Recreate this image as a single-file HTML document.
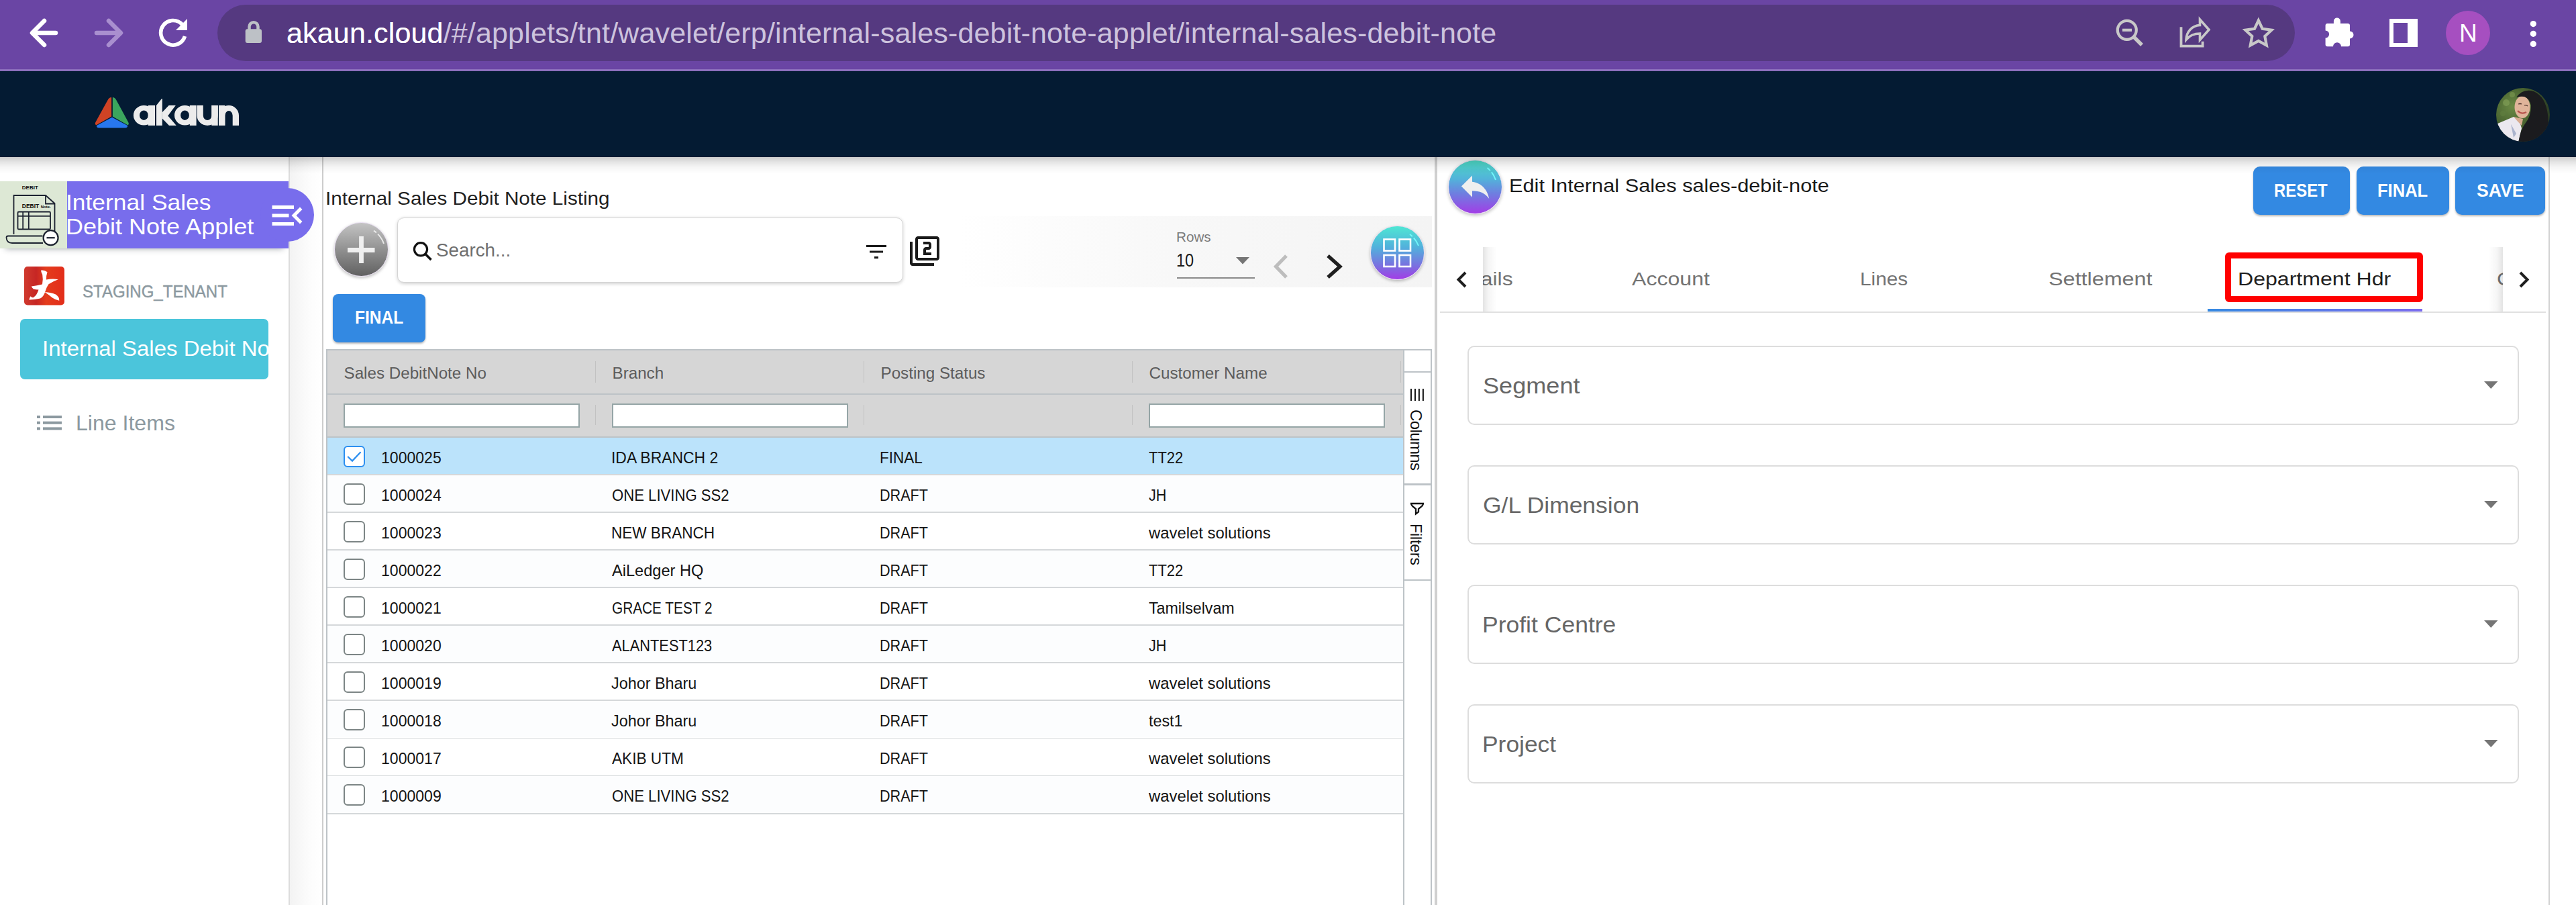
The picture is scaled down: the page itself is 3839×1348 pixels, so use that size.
<!DOCTYPE html>
<html><head><meta charset="utf-8">
<style>
*{box-sizing:border-box;margin:0;padding:0}
html,body{width:3839px;height:1348px;overflow:hidden;background:#fff;font-family:"Liberation Sans",sans-serif}
.a{position:absolute}
.t{position:absolute;white-space:nowrap;line-height:1;transform-origin:0 0}
svg{position:absolute;overflow:visible}
</style></head><body>

<!-- ===== Browser toolbar ===== -->
<div class="a" style="left:0;top:0;width:3839px;height:104px;background:#6a45a4"></div>
<div class="a" style="left:0;top:103px;width:3839px;height:3px;background:#8c6fbc"></div>
<div class="a" style="left:324px;top:7px;width:3096px;height:84px;border-radius:42px;background:#553980"></div>
<!-- back -->
<svg style="left:0;top:0" width="300" height="100"><g fill="none" stroke-linecap="round" stroke-linejoin="round" stroke-width="6.5">
<path d="M49 49H83M66 31L48 49L66 67" stroke="#fff"/>
<path d="M144 49H178M162 31L180 49L162 67" stroke="#a98fcf"/>
<path d="M275.5 54A18.3 18.3 0 1 1 271.5 36.5" stroke="#fff" stroke-width="5.6" stroke-linecap="butt"/>
</g>
<path d="M279 28V45H262Z" fill="#fff"/>
</svg>
<!-- lock -->
<svg style="left:360px;top:25px" width="40" height="45"><path d="M11.5 19V14.75A6.5 6.5 0 0 1 24.5 14.75V19" fill="none" stroke="#bdc1c6" stroke-width="4.5"/><rect x="5.7" y="18.2" width="24.3" height="20.8" rx="3" fill="#bdc1c6"/></svg>
<div class="t" style="left:427px;top:27.5px;font-size:43px;letter-spacing:0.16px;color:#cdc3dd">akaun.cloud<span style="color:#fff;position:absolute;left:0;top:0">akaun.cloud</span>/#/applets/tnt/wavelet/erp/internal-sales-debit-note-applet/internal-sales-debit-note</div>
<!-- right icons -->
<svg style="left:3140px;top:20px" width="270" height="60"><g fill="none" stroke="#c8c8c8" stroke-width="4.2">
<circle cx="29.8" cy="24.8" r="14"/><path d="M23 24.8H37"/><path d="M39.5 34.5L52 47" stroke-width="5.5"/>
<path d="M110.5 20.2V48.7H142.6V41.7" stroke-width="3.8"/>
<path d="M138.5 9L152 24.3L138.5 39.5V30C130 30 123 33 118 39C118.5 27 127 18 138.5 17.5Z" stroke-width="3.6" stroke-linejoin="miter"/>
<path d="M225.80 10.50L231.68 22.91L245.30 24.67L235.31 34.09L237.85 47.58L225.80 41.00L213.75 47.58L216.29 34.09L206.30 24.67L219.92 22.91Z" stroke-linejoin="miter"/>
</g></svg>
<svg style="left:3460px;top:20px" width="330" height="70"><g fill="#fff">
<path d="M17.9 14.9V11.6A5 5 0 0 1 27.9 11.6V14.9H39A3 3 0 0 1 42 17.9V26.4A5.5 5.5 0 0 1 42 37.4V46.2A3 3 0 0 1 39 49.2H29A6 6 0 0 0 17 49.2H8.6A3 3 0 0 1 5.6 46.2V36.5A5.5 5.5 0 0 0 5.6 25.5V17.9A3 3 0 0 1 8.6 14.9Z"/>
<path d="M101 8H143V50H101ZM107 14V44H128V14Z" fill-rule="evenodd"/>
<circle cx="315.3" cy="15.6" r="4.6"/><circle cx="315.3" cy="30.3" r="4.6"/><circle cx="315.3" cy="45.4" r="4.6"/>
</g></svg>
<div class="a" style="left:3645px;top:16px;width:66px;height:66px;border-radius:50%;background:#a64fc0"></div>
<div class="t" style="left:3665px;top:30.5px;font-size:37px;color:#fff">N</div>

<!-- ===== Navy app header ===== -->
<div class="a" style="left:0;top:106px;width:3839px;height:128px;background:#041b33"></div>

<!-- akaun logo -->
<svg style="left:135px;top:140px" width="60" height="56">
<path d="M30.9 5Q27.8 5.2 25.6 9L7.4 42Q5.8 45.6 8.6 46.3L31.1 33.4V5.2Z" fill="#d04325"/>
<path d="M32.9 5Q36.1 5.2 38.3 9L56.2 42Q57.9 45.6 55.2 46.3L32.9 33.4Z" fill="#3ba55d"/>
<path d="M32 34.7L55 46.9Q55.6 50.3 51.5 50.5H12.5Q8.4 50.3 9.1 47Z" fill="#2877ee"/>
</svg>
<svg style="left:195px;top:140px" width="170" height="50"><g fill="#ececec">
<path fill-rule="evenodd" d="M3.9 31.7A15.5 14.8 0 1 0 34.9 31.7A15.5 14.8 0 1 0 3.9 31.7ZM13 31.7A6.4 7.2 0 1 0 25.8 31.7A6.4 7.2 0 1 0 13 31.7Z"/>
<rect x="25.8" y="17" width="10.2" height="30"/>
<path d="M38 17L46 7H46.8V47H38Z"/>
<path d="M46.8 27.3L56.6 17H66.8L55.2 32.4L67.8 47H57L46.8 36.6Z"/>
<path fill-rule="evenodd" d="M65 31.7A15.5 14.8 0 1 0 96 31.7A15.5 14.8 0 1 0 65 31.7ZM74.1 31.7A6.4 7.2 0 1 0 86.9 31.7A6.4 7.2 0 1 0 74.1 31.7Z"/>
<rect x="87.8" y="17" width="9.8" height="30"/>
<path d="M98.5 17V32A15.6 15 0 0 0 129.7 32V17H120.4V32A6.3 6.9 0 0 1 107.8 32V17Z"/>
<rect x="120.4" y="17" width="9.3" height="30"/>
<path d="M131 47V32A15 15 0 0 1 161 32V47H151.7V32A5.7 6.9 0 0 0 140.3 32V47Z"/>
<rect x="131" y="17" width="9.3" height="30"/>
</g></svg>
<!-- avatar -->
<svg style="left:3720px;top:131px" width="80" height="80"><defs><clipPath id="avc"><circle cx="40" cy="40" r="40"/></clipPath>
<radialGradient id="avbg" cx="30%" cy="35%" r="70%"><stop offset="0" stop-color="#6b8a45"/><stop offset=".6" stop-color="#455f2e"/><stop offset="1" stop-color="#2c3d24"/></radialGradient></defs>
<g clip-path="url(#avc)">
<rect width="80" height="80" fill="url(#avbg)"/>
<circle cx="15" cy="22" r="5" fill="#86a35a" opacity=".6"/><circle cx="24" cy="10" r="4" fill="#7d9a52" opacity=".6"/><circle cx="10" cy="38" r="4" fill="#5f7d3f" opacity=".7"/>
<path d="M0 54L26 43L34 47L38 60L33 82H0Z" fill="#ebe8ef"/>
<path d="M26 43Q32 50 38 56L40 46Z" fill="#d7ab90"/>
<path d="M22 54L30 68L26 74Z" fill="#7e8fb5" opacity=".6"/>
<ellipse cx="39" cy="28.5" rx="11.5" ry="16.5" fill="#e0b49a"/>
<path d="M30 14Q40 0 56 5Q74 13 77 40Q80 64 72 82H33Q36 62 44 52Q52 42 52 26Q50 16 42 13Q36 12 30 14Z" fill="#1b1b1e"/>
<path d="M32 34Q38 40 45 36" stroke="#b8554d" stroke-width="2.2" fill="none"/>
<path d="M33 24Q36 23 38 24M42 26Q45 25 47 27" stroke="#4a3028" stroke-width="1.3" fill="none"/>
</g></svg>
<!-- ===== Left sidebar ===== -->
<div class="a" style="left:430px;top:234px;width:2px;height:1114px;background:#dddddd"></div>
<div class="a" style="left:432px;top:234px;width:48px;height:1114px;background:linear-gradient(90deg,#f3f3f3,#fcfcfc 60%,#fff)"></div>

<!-- applet title panel -->
<div class="a" style="left:0;top:270px;width:430px;height:100px;background:#786dec;box-shadow:0 8px 9px -8px rgba(40,50,60,.45)"></div>
<div class="a" style="left:388px;top:280px;width:80px;height:80px;border-radius:50%;background:#786dec"></div>
<div class="a" style="left:0;top:270px;width:100px;height:100px;background:#dde8d5"></div>
<svg style="left:0;top:270px" width="100" height="100">
<g fill="none" stroke="#1c2230" stroke-width="1.8">
<path d="M20.5 79V21H68L81.5 33V81"/><path d="M68 21V33.5H81.5"/>
<rect x="26.5" y="45.5" width="48.5" height="26" rx="1.5"/><path d="M26.5 51.8H75M34.2 45.5V71.5M42.8 45.5V71.5"/>
<path d="M63.5 81.5H12Q9.5 81.5 9.5 84Q10 92 18 92H64"/>
</g>
<circle cx="75.6" cy="84.2" r="11" fill="#fff" stroke="#1c2230" stroke-width="2.2"/><path d="M69.5 84.2H81.7" stroke="#1c2230" stroke-width="2.2"/>
<text x="32.8" y="11.7" font-family="Liberation Sans" font-weight="bold" font-size="8" fill="#111">DEBIT</text>
<text x="32.8" y="40" font-family="Liberation Sans" font-weight="bold" font-size="8.5" fill="#111">DEBIT <tspan font-size="6">Note.</tspan></text>
</svg>
<div class="t" style="left:98.3px;top:285.1px;font-size:33px;transform:scaleX(1.073);color:#fff">Internal Sales</div>
<div class="t" style="left:98.2px;top:320.8px;font-size:33px;transform:scaleX(1.091);color:#fff">Debit Note Applet</div>
<svg style="left:398.3px;top:291px" width="60" height="60" viewBox="0 0 24 24"><path fill="#fff" d="M3 18h13v-2H3v2zm0-5h10v-2H3v2zm0-7v2h13V6H3zm18 9.59L17.42 12 21 8.41 19.59 7l-5 5 5 5L21 15.59z"/></svg>
<!-- tenant -->
<svg style="left:36px;top:397px" width="60" height="58"><defs><linearGradient id="tg" x1="0" x2="1"><stop offset="0" stop-color="#d03a2e"/><stop offset=".3" stop-color="#c62624"/><stop offset=".55" stop-color="#e43c1c"/><stop offset="1" stop-color="#e22d1a"/></linearGradient></defs>
<rect width="60" height="57.5" rx="5" fill="url(#tg)"/>
<path d="M24.9 5.8Q30 4.8 34.5 8.2Q32.8 13 33 19.6Q42 17.5 50.8 19.2Q44 21.5 36.5 26.2Q33 31 31.5 37Q29 45 24 47.5Q15 49.5 7.3 49.4Q8 46 9.6 44.2Q11 46.5 13.5 46.2Q19 43 21.5 34.5Q17 34.5 13.8 33.4Q11.5 31.5 10.8 29.6Q19 28.5 27 26.6Q28.5 19 27.2 12Q25.5 9 24.9 5.8Z" fill="#fff"/><path d="M30.5 38Q41 38.5 47 41.5Q52.5 45 52.3 50.8Q47 50 42 46.5Q36 41.5 30.5 38Z" fill="#fff"/>
</svg>
<div class="t" style="left:123.4px;top:421.8px;font-size:25px;transform:scaleX(0.961);color:#8c99a0;-webkit-text-stroke:0.4px #8c99a0">STAGING_TENANT</div>
<!-- teal item -->
<div class="a" style="left:30px;top:475px;width:370px;height:90px;border-radius:7px;background:#4bc5db;overflow:hidden">
<div class="t" style="left:33.2px;top:28.6px;font-size:31px;transform:scaleX(1.063);color:#fff">Internal Sales Debit Note</div>
</div>
<!-- line items -->
<svg style="left:55px;top:619px" width="38" height="22"><g fill="#8c99a0"><rect x="0" y="0" width="5" height="4"/><rect x="9" y="0" width="28" height="4"/><rect x="0" y="8.7" width="5" height="4"/><rect x="9" y="8.7" width="28" height="4"/><rect x="0" y="17.4" width="5" height="4"/><rect x="9" y="17.4" width="28" height="4"/></g></svg>
<div class="t" style="left:113.4px;top:614.6px;font-size:31.5px;transform:scaleX(1.018);color:#8c99a0">Line Items</div>
<!-- ===== Listing panel ===== -->
<div class="a" style="left:480px;top:234px;width:2px;height:1114px;background:#cdcdcd"></div>

<!-- LISTING START -->
<!-- listing title & toolbar -->
<div class="t" style="left:484.6px;top:281.6px;font-size:27.5px;transform:scaleX(1.078);color:#1f1f1f">Internal Sales Debit Note Listing</div>
<div class="a" style="left:1430px;top:322px;width:704px;height:106px;background:linear-gradient(90deg,rgba(248,248,248,0),#f8f8f8 45%,#f4f4f4)"></div>
<div class="a" style="left:497.5px;top:331px;width:81px;height:81px;border-radius:50%;border:1.5px solid #e6dcef;background:linear-gradient(180deg,#c4c4c4,#8c8c8c 55%,#616161);box-shadow:0 2px 4px rgba(0,0,0,.25)"></div>
<svg style="left:497.5px;top:331px" width="81" height="81"><path d="M20 41.5H60.5M40.5 21V61" stroke="#efefef" stroke-width="6.8"/><path d="M59 12.5A38 38 0 0 1 74 32" fill="none" stroke="rgba(255,255,255,.75)" stroke-width="2" stroke-dasharray="5 3 40"/></svg>
<div class="a" style="left:591.5px;top:323.5px;width:754.5px;height:97px;border-radius:10px;background:#fff;border:1.8px solid #d4d4d4;box-shadow:0 1.5px 5px rgba(0,0,0,.18)"></div>
<svg style="left:612px;top:357px" width="36" height="36"><circle cx="15" cy="14.3" r="9.6" fill="none" stroke="#111" stroke-width="3.2"/><path d="M21.8 21.3L30.5 30" stroke="#111" stroke-width="3.6"/></svg>
<div class="t" style="left:650.3px;top:358.3px;font-size:28.5px;transform:scaleX(0.974);color:#6f6f6f">Search...</div>
<svg style="left:1291px;top:365px" width="31" height="21"><g fill="#1a1a1a"><rect x="0" y="0" width="30" height="3"/><rect x="5" y="8.5" width="20" height="3"/><rect x="12" y="17" width="6" height="3.2"/></g></svg>
<svg style="left:1354px;top:350px" width="48" height="48" viewBox="0 0 24 24"><path fill="#1a1a1a" d="M3 5H1v16c0 1.1.9 2 2 2h16v-2H3V5zm18-4H7c-1.1 0-2 .9-2 2v14c0 1.1.9 2 2 2h14c1.1 0 2-.9 2-2V3c0-1.1-.9-2-2-2zm0 16H7V3h14v14zm-4-4h-4v-2h2c1.1 0 2-.89 2-2V7c0-1.11-.9-2-2-2h-4v2h4v2h-2c-1.1 0-2 .89-2 2v4h6v-2z"/></svg>
<div class="t" style="left:1752.6px;top:341.8px;font-size:21px;transform:scaleX(0.984);color:#7a7a7a">Rows</div>
<div class="t" style="left:1752.8px;top:375.4px;font-size:27px;transform:scaleX(0.87);color:#1a1a1a">10</div>
<svg style="left:1842px;top:383px" width="20" height="11"><path d="M0 0H20L10 10.5Z" fill="#757575"/></svg>
<div class="a" style="left:1754px;top:412.5px;width:116px;height:2px;background:#8a8a8a"></div>
<svg style="left:1895px;top:376px" width="110" height="42"><path d="M22 5L6.5 21L22 37" fill="none" stroke="#bdbdbd" stroke-width="5.2"/><path d="M84 5L102 21L84 37" fill="none" stroke="#1f1f1f" stroke-width="5.2"/></svg>
<div class="a" style="left:2042px;top:336px;width:80.5px;height:80.5px;border-radius:50%;border:1.5px solid #e8dcf0;background:linear-gradient(180deg,#4ee7d3,#52b0dc 40%,#7b6fe0 75%,#a23de6);box-shadow:0 2px 4px rgba(0,0,0,.25)"></div>
<svg style="left:2042px;top:336px" width="81" height="81"><g fill="none" stroke="#fff" stroke-width="2.6"><rect x="20.5" y="20.5" width="16.5" height="17"/><rect x="43.5" y="20.5" width="16.5" height="17"/><rect x="20.5" y="44" width="16.5" height="17"/><rect x="43.5" y="44" width="16.5" height="17"/></g><path d="M59 13A38 38 0 0 1 72 30" fill="none" stroke="rgba(120,255,255,.85)" stroke-width="2" stroke-dasharray="5 3 40"/></svg>
<div class="a" style="left:496px;top:438px;width:138px;height:72px;border-radius:8px;background:#3389e2;box-shadow:0 2px 3px rgba(0,0,0,.28)"></div>
<div class="t" style="left:528.5px;top:459.3px;font-size:28px;font-weight:bold;color:#fff;transform:scaleX(0.875)">FINAL</div>
<!-- table -->
<div class="a" style="left:486px;top:520px;width:1648px;height:830px;border:2px solid #bdc3c7;border-bottom:none;background:#fff"></div>
<div class="a" style="left:488px;top:522px;width:1603px;height:130px;background:#d6d6d6"></div>
<div class="a" style="left:488px;top:586px;width:1603px;height:2px;background:#bdc3c7"></div>
<div class="a" style="left:488px;top:650px;width:1603px;height:2px;background:#bdc3c7"></div>
<div class="t" style="left:512.5px;top:543.9px;font-size:24.2px;color:#5c5c5c">Sales DebitNote No</div>
<div class="a" style="left:512px;top:601px;width:352px;height:36px;border:2px solid #95a5a6;background:#fff"></div>
<div class="t" style="left:912.5px;top:543.9px;font-size:24.2px;color:#5c5c5c">Branch</div>
<div class="a" style="left:887px;top:538px;width:1px;height:32px;background:#c2c2c2"></div>
<div class="a" style="left:887px;top:603px;width:1px;height:30px;background:#c2c2c2"></div>
<div class="a" style="left:912px;top:601px;width:352px;height:36px;border:2px solid #95a5a6;background:#fff"></div>
<div class="t" style="left:1312.5px;top:543.9px;font-size:24.2px;color:#5c5c5c">Posting Status</div>
<div class="a" style="left:1287px;top:538px;width:1px;height:32px;background:#c2c2c2"></div>
<div class="a" style="left:1287px;top:603px;width:1px;height:30px;background:#c2c2c2"></div>
<div class="t" style="left:1712.5px;top:543.9px;font-size:24.2px;color:#5c5c5c">Customer Name</div>
<div class="a" style="left:1687px;top:538px;width:1px;height:32px;background:#c2c2c2"></div>
<div class="a" style="left:1687px;top:603px;width:1px;height:30px;background:#c2c2c2"></div>
<div class="a" style="left:1712px;top:601px;width:352px;height:36px;border:2px solid #95a5a6;background:#fff"></div>
<div class="a" style="left:2087px;top:538px;width:1px;height:32px;background:#c2c2c2"></div>
<div class="a" style="left:2087px;top:603px;width:1px;height:30px;background:#c2c2c2"></div>
<div class="a" style="left:488px;top:652.0px;width:1603px;height:54px;background:#bbe3fb"></div>
<div class="a" style="left:488px;top:706.2px;width:1603px;height:2px;background:#d5d8da"></div>
<div class="a" style="left:512.2px;top:664.0px;width:32px;height:32px;border:2px solid #2c8ff0;border-radius:6px;background:#fff"></div>
<svg style="left:512.2px;top:664.0px" width="32" height="32"><path d="M6.2 16L13 22.5L25.6 9.2" fill="none" stroke="#2c8ff0" stroke-width="2.3"/></svg>
<div class="t" style="left:568.0px;top:669.8px;font-size:24.5px;transform:scaleX(0.941);color:#141414">1000025</div>
<div class="t" style="left:910.5px;top:669.8px;font-size:24.5px;transform:scaleX(0.936);color:#141414">IDA BRANCH 2</div>
<div class="t" style="left:1310.7px;top:669.8px;font-size:24.5px;transform:scaleX(0.919);color:#141414">FINAL</div>
<div class="t" style="left:1712.4px;top:669.8px;font-size:24.5px;transform:scaleX(0.895);color:#141414">TT22</div>
<div class="a" style="left:488px;top:708.0px;width:1603px;height:54px;background:#fcfdfe"></div>
<div class="a" style="left:488px;top:762.2px;width:1603px;height:2px;background:#d5d8da"></div>
<div class="a" style="left:512.2px;top:720.0px;width:32px;height:32px;border:2.2px solid #7c8585;border-radius:6px;background:#fff"></div>
<div class="t" style="left:568.0px;top:725.8px;font-size:24.5px;transform:scaleX(0.941);color:#141414">1000024</div>
<div class="t" style="left:911.5px;top:725.8px;font-size:24.5px;transform:scaleX(0.903);color:#141414">ONE LIVING SS2</div>
<div class="t" style="left:1310.7px;top:725.8px;font-size:24.5px;transform:scaleX(0.881);color:#141414">DRAFT</div>
<div class="t" style="left:1711.5px;top:725.8px;font-size:24.5px;transform:scaleX(0.881);color:#141414">JH</div>
<div class="a" style="left:488px;top:764.1px;width:1603px;height:54px;background:#ffffff"></div>
<div class="a" style="left:488px;top:818.3px;width:1603px;height:2px;background:#d5d8da"></div>
<div class="a" style="left:512.2px;top:776.1px;width:32px;height:32px;border:2.2px solid #7c8585;border-radius:6px;background:#fff"></div>
<div class="t" style="left:568.0px;top:781.9px;font-size:24.5px;transform:scaleX(0.941);color:#141414">1000023</div>
<div class="t" style="left:910.6px;top:781.9px;font-size:24.5px;transform:scaleX(0.92);color:#141414">NEW BRANCH</div>
<div class="t" style="left:1310.7px;top:781.9px;font-size:24.5px;transform:scaleX(0.881);color:#141414">DRAFT</div>
<div class="t" style="left:1712.4px;top:781.9px;font-size:24.5px;transform:scaleX(0.974);color:#141414">wavelet solutions</div>
<div class="a" style="left:488px;top:820.1px;width:1603px;height:54px;background:#fcfdfe"></div>
<div class="a" style="left:488px;top:874.3px;width:1603px;height:2px;background:#d5d8da"></div>
<div class="a" style="left:512.2px;top:832.1px;width:32px;height:32px;border:2.2px solid #7c8585;border-radius:6px;background:#fff"></div>
<div class="t" style="left:568.0px;top:837.9px;font-size:24.5px;transform:scaleX(0.941);color:#141414">1000022</div>
<div class="t" style="left:912.4px;top:837.9px;font-size:24.5px;transform:scaleX(0.962);color:#141414">AiLedger HQ</div>
<div class="t" style="left:1310.7px;top:837.9px;font-size:24.5px;transform:scaleX(0.881);color:#141414">DRAFT</div>
<div class="t" style="left:1712.4px;top:837.9px;font-size:24.5px;transform:scaleX(0.895);color:#141414">TT22</div>
<div class="a" style="left:488px;top:876.2px;width:1603px;height:54px;background:#ffffff"></div>
<div class="a" style="left:488px;top:930.4px;width:1603px;height:2px;background:#d5d8da"></div>
<div class="a" style="left:512.2px;top:888.2px;width:32px;height:32px;border:2.2px solid #7c8585;border-radius:6px;background:#fff"></div>
<div class="t" style="left:568.0px;top:894.0px;font-size:24.5px;transform:scaleX(0.941);color:#141414">1000021</div>
<div class="t" style="left:911.6px;top:894.0px;font-size:24.5px;transform:scaleX(0.849);color:#141414">GRACE TEST 2</div>
<div class="t" style="left:1310.7px;top:894.0px;font-size:24.5px;transform:scaleX(0.881);color:#141414">DRAFT</div>
<div class="t" style="left:1712.4px;top:894.0px;font-size:24.5px;transform:scaleX(0.947);color:#141414">Tamilselvam</div>
<div class="a" style="left:488px;top:932.2px;width:1603px;height:54px;background:#fcfdfe"></div>
<div class="a" style="left:488px;top:986.4px;width:1603px;height:2px;background:#d5d8da"></div>
<div class="a" style="left:512.2px;top:944.2px;width:32px;height:32px;border:2.2px solid #7c8585;border-radius:6px;background:#fff"></div>
<div class="t" style="left:568.0px;top:950.0px;font-size:24.5px;transform:scaleX(0.941);color:#141414">1000020</div>
<div class="t" style="left:912.4px;top:950.0px;font-size:24.5px;transform:scaleX(0.891);color:#141414">ALANTEST123</div>
<div class="t" style="left:1310.7px;top:950.0px;font-size:24.5px;transform:scaleX(0.881);color:#141414">DRAFT</div>
<div class="t" style="left:1711.5px;top:950.0px;font-size:24.5px;transform:scaleX(0.881);color:#141414">JH</div>
<div class="a" style="left:488px;top:988.2px;width:1603px;height:54px;background:#ffffff"></div>
<div class="a" style="left:488px;top:1042.4px;width:1603px;height:2px;background:#d5d8da"></div>
<div class="a" style="left:512.2px;top:1000.2px;width:32px;height:32px;border:2.2px solid #7c8585;border-radius:6px;background:#fff"></div>
<div class="t" style="left:568.0px;top:1006.0px;font-size:24.5px;transform:scaleX(0.941);color:#141414">1000019</div>
<div class="t" style="left:911.4px;top:1006.0px;font-size:24.5px;transform:scaleX(0.953);color:#141414">Johor Bharu</div>
<div class="t" style="left:1310.7px;top:1006.0px;font-size:24.5px;transform:scaleX(0.881);color:#141414">DRAFT</div>
<div class="t" style="left:1712.4px;top:1006.0px;font-size:24.5px;transform:scaleX(0.974);color:#141414">wavelet solutions</div>
<div class="a" style="left:488px;top:1044.3px;width:1603px;height:54px;background:#fcfdfe"></div>
<div class="a" style="left:488px;top:1098.5px;width:1603px;height:2px;background:#d5d8da"></div>
<div class="a" style="left:512.2px;top:1056.3px;width:32px;height:32px;border:2.2px solid #7c8585;border-radius:6px;background:#fff"></div>
<div class="t" style="left:568.0px;top:1062.1px;font-size:24.5px;transform:scaleX(0.941);color:#141414">1000018</div>
<div class="t" style="left:911.4px;top:1062.1px;font-size:24.5px;transform:scaleX(0.953);color:#141414">Johor Bharu</div>
<div class="t" style="left:1310.7px;top:1062.1px;font-size:24.5px;transform:scaleX(0.881);color:#141414">DRAFT</div>
<div class="t" style="left:1712.4px;top:1062.1px;font-size:24.5px;transform:scaleX(0.952);color:#141414">test1</div>
<div class="a" style="left:488px;top:1100.3px;width:1603px;height:54px;background:#ffffff"></div>
<div class="a" style="left:488px;top:1154.5px;width:1603px;height:2px;background:#d5d8da"></div>
<div class="a" style="left:512.2px;top:1112.3px;width:32px;height:32px;border:2.2px solid #7c8585;border-radius:6px;background:#fff"></div>
<div class="t" style="left:568.0px;top:1118.1px;font-size:24.5px;transform:scaleX(0.941);color:#141414">1000017</div>
<div class="t" style="left:912.4px;top:1118.1px;font-size:24.5px;transform:scaleX(0.923);color:#141414">AKIB UTM</div>
<div class="t" style="left:1310.7px;top:1118.1px;font-size:24.5px;transform:scaleX(0.881);color:#141414">DRAFT</div>
<div class="t" style="left:1712.4px;top:1118.1px;font-size:24.5px;transform:scaleX(0.974);color:#141414">wavelet solutions</div>
<div class="a" style="left:488px;top:1156.4px;width:1603px;height:54px;background:#fcfdfe"></div>
<div class="a" style="left:488px;top:1210.6px;width:1603px;height:2px;background:#d5d8da"></div>
<div class="a" style="left:512.2px;top:1168.4px;width:32px;height:32px;border:2.2px solid #7c8585;border-radius:6px;background:#fff"></div>
<div class="t" style="left:568.0px;top:1174.2px;font-size:24.5px;transform:scaleX(0.941);color:#141414">1000009</div>
<div class="t" style="left:911.5px;top:1174.2px;font-size:24.5px;transform:scaleX(0.903);color:#141414">ONE LIVING SS2</div>
<div class="t" style="left:1310.7px;top:1174.2px;font-size:24.5px;transform:scaleX(0.881);color:#141414">DRAFT</div>
<div class="t" style="left:1712.4px;top:1174.2px;font-size:24.5px;transform:scaleX(0.974);color:#141414">wavelet solutions</div>
<div class="a" style="left:2091px;top:522px;width:2px;height:830px;background:#bdc3c7"></div>
<div class="a" style="left:2093px;top:553px;width:40px;height:2px;background:#bdc3c7"></div>
<div class="a" style="left:2093px;top:719.5px;width:40px;height:3.5px;background:#bdc3c7"></div>
<div class="a" style="left:2093px;top:862.5px;width:40px;height:2px;background:#bdc3c7"></div>
<svg style="left:2101px;top:578px" width="22" height="20"><g fill="#1a1a1a"><rect x="0.9" y="1" width="2.1" height="18"/><rect x="6.9" y="1" width="2.1" height="18"/><rect x="12.8" y="1" width="2.1" height="18"/><rect x="18.8" y="1" width="2.1" height="18"/></g></svg>
<div class="t" style="left:2122.4px;top:610px;font-size:24px;letter-spacing:-0.6px;color:#141414;transform:rotate(90deg)">Columns</div>
<svg style="left:2101px;top:747px" width="23" height="21"><path d="M2 3H20Q20 5 18 7L13 11V15.5L9 18.5V11L4 7Q2 5 2 3Z" fill="none" stroke="#111" stroke-width="2.3" stroke-linejoin="miter"/></svg>
<div class="t" style="left:2122px;top:779.7px;font-size:24px;letter-spacing:-0.1px;color:#141414;transform:rotate(90deg) scaleX(0.958)">Filters</div>
<!-- LISTING END -->
<!-- ===== Divider ===== -->
<div class="a" style="left:2138px;top:234px;width:4px;height:1114px;background:#d0d0d0"></div>

<!-- ===== Right panel ===== -->
<div class="a" style="left:3798px;top:234px;width:2px;height:1114px;background:#d3d3d3"></div>

<!-- RIGHT START -->
<!-- back button -->
<div class="a" style="left:2157.5px;top:237.5px;width:81px;height:81px;border-radius:50%;border:1.5px solid #eadff2;background:linear-gradient(180deg,#4cd9c4,#52b3da 35%,#6e7fe0 62%,#a23de6);box-shadow:0 2px 5px rgba(0,0,0,.25)"></div>
<svg style="left:2170.9px;top:249.8px" width="55.2" height="55.2" viewBox="0 0 24 24"><path fill="#efefef" d="M10 9V5l-7 7 7 7v-4.1c5 0 8.5 1.6 11 5.1-1-5-4-10-11-11z"/></svg>
<svg style="left:2157.5px;top:237.5px" width="81" height="81"><path d="M58.5 12A38 38 0 0 1 71 30" fill="none" stroke="rgba(120,255,255,.85)" stroke-width="2" stroke-dasharray="6 3 40"/></svg>
<div class="t" style="left:2249.3px;top:264.1px;font-size:27px;transform:scaleX(1.139);color:#1a1a1a">Edit Internal Sales sales-debit-note</div>
<div class="a" style="left:3358px;top:248px;width:144px;height:72px;border-radius:10px;background:#3389e2;box-shadow:0 2px 3px rgba(0,0,0,.28)"></div>
<div class="t" style="left:3389.3px;top:270.2px;font-size:28px;font-weight:bold;color:#fff;transform:scaleX(0.854)">RESET</div>
<div class="a" style="left:3512px;top:248px;width:138px;height:72px;border-radius:10px;background:#3389e2;box-shadow:0 2px 3px rgba(0,0,0,.28)"></div>
<div class="t" style="left:3543px;top:270.2px;font-size:28px;font-weight:bold;color:#fff;transform:scaleX(0.912)">FINAL</div>
<div class="a" style="left:3659px;top:248px;width:134px;height:72px;border-radius:10px;background:#3389e2;box-shadow:0 2px 3px rgba(0,0,0,.28)"></div>
<div class="t" style="left:3690.6px;top:270.2px;font-size:28px;font-weight:bold;color:#fff;transform:scaleX(0.95)">SAVE</div>
<!-- tabs -->
<div class="a" style="left:2146px;top:464px;width:1648px;height:2px;background:#e0e0e0"></div>
<div class="t" style="left:2157px;top:402.3px;font-size:27.8px;transform:scaleX(1.15);color:#737373">Details</div>
<div class="t" style="left:2431.7px;top:402.3px;font-size:27.8px;transform:scaleX(1.155);color:#737373">Account</div>
<div class="t" style="left:2772.4px;top:402.3px;font-size:27.8px;transform:scaleX(1.072);color:#737373">Lines</div>
<div class="t" style="left:3052.8px;top:402.3px;font-size:27.8px;transform:scaleX(1.163);color:#737373">Settlement</div>
<div class="t" style="left:3334.7px;top:402.3px;font-size:27.8px;transform:scaleX(1.154);color:#1f1f1f">Department Hdr</div>
<div class="t" style="left:3721px;top:402.3px;font-size:27.8px;transform:scaleX(1.15);color:#737373">Cust</div>
<div class="a" style="left:3290px;top:459.5px;width:320px;height:4.5px;background:linear-gradient(90deg,#3589e2,#7b6cf0)"></div>
<div class="a" style="left:3316px;top:376px;width:295px;height:74px;border:9px solid #ff0000;border-radius:6px"></div>
<div class="a" style="left:2146px;top:368px;width:64px;height:96px;background:#fff"></div><div class="a" style="left:2210px;top:368px;width:21px;height:96px;background:linear-gradient(90deg,rgba(0,0,0,.11),rgba(0,0,0,.04) 40%,rgba(0,0,0,0))"></div>
<svg style="left:2168px;top:403px" width="20" height="27"><path d="M16 3L5.5 13.5L16 24" fill="none" stroke="#1f1f1f" stroke-width="4"/></svg>
<div class="a" style="left:3729.5px;top:368px;width:64.5px;height:96px;background:#fff"></div><div class="a" style="left:3708.5px;top:368px;width:21px;height:96px;background:linear-gradient(270deg,rgba(0,0,0,.11),rgba(0,0,0,.04) 40%,rgba(0,0,0,0))"></div>
<svg style="left:3752px;top:403px" width="20" height="27"><path d="M4 3L14.5 13.5L4 24" fill="none" stroke="#1f1f1f" stroke-width="4"/></svg>
<div class="a" style="left:2186.5px;top:514.6px;width:1567.5px;height:118px;border:2px solid #dddddd;border-radius:10px;background:#fff"></div>
<div class="t" style="left:2209.8px;top:558.0px;font-size:33px;transform:scaleX(1.094);color:#666">Segment</div>
<svg style="left:3701.5px;top:567.6px" width="21" height="11.5"><path d="M0 0H20.5L10.25 11Z" fill="#757575"/></svg>
<div class="a" style="left:2186.5px;top:692.7px;width:1567.5px;height:118px;border:2px solid #dddddd;border-radius:10px;background:#fff"></div>
<div class="t" style="left:2209.8px;top:736.0px;font-size:33px;transform:scaleX(1.074);color:#666">G/L Dimension</div>
<svg style="left:3701.5px;top:745.7px" width="21" height="11.5"><path d="M0 0H20.5L10.25 11Z" fill="#757575"/></svg>
<div class="a" style="left:2186.5px;top:870.8px;width:1567.5px;height:118px;border:2px solid #dddddd;border-radius:10px;background:#fff"></div>
<div class="t" style="left:2208.8px;top:914.0px;font-size:33px;transform:scaleX(1.076);color:#666">Profit Centre</div>
<svg style="left:3701.5px;top:923.8px" width="21" height="11.5"><path d="M0 0H20.5L10.25 11Z" fill="#757575"/></svg>
<div class="a" style="left:2186.5px;top:1048.9px;width:1567.5px;height:118px;border:2px solid #dddddd;border-radius:10px;background:#fff"></div>
<div class="t" style="left:2208.8px;top:1092.0px;font-size:33px;transform:scaleX(1.072);color:#666">Project</div>
<svg style="left:3701.5px;top:1101.9px" width="21" height="11.5"><path d="M0 0H20.5L10.25 11Z" fill="#757575"/></svg>
<!-- RIGHT END -->
<!-- header shadow -->
<div class="a" style="left:0;top:234px;width:3839px;height:25px;background:linear-gradient(180deg,rgba(0,0,0,.2),rgba(0,0,0,.1) 30%,rgba(0,0,0,.035) 62%,rgba(0,0,0,0))"></div>

</body></html>
